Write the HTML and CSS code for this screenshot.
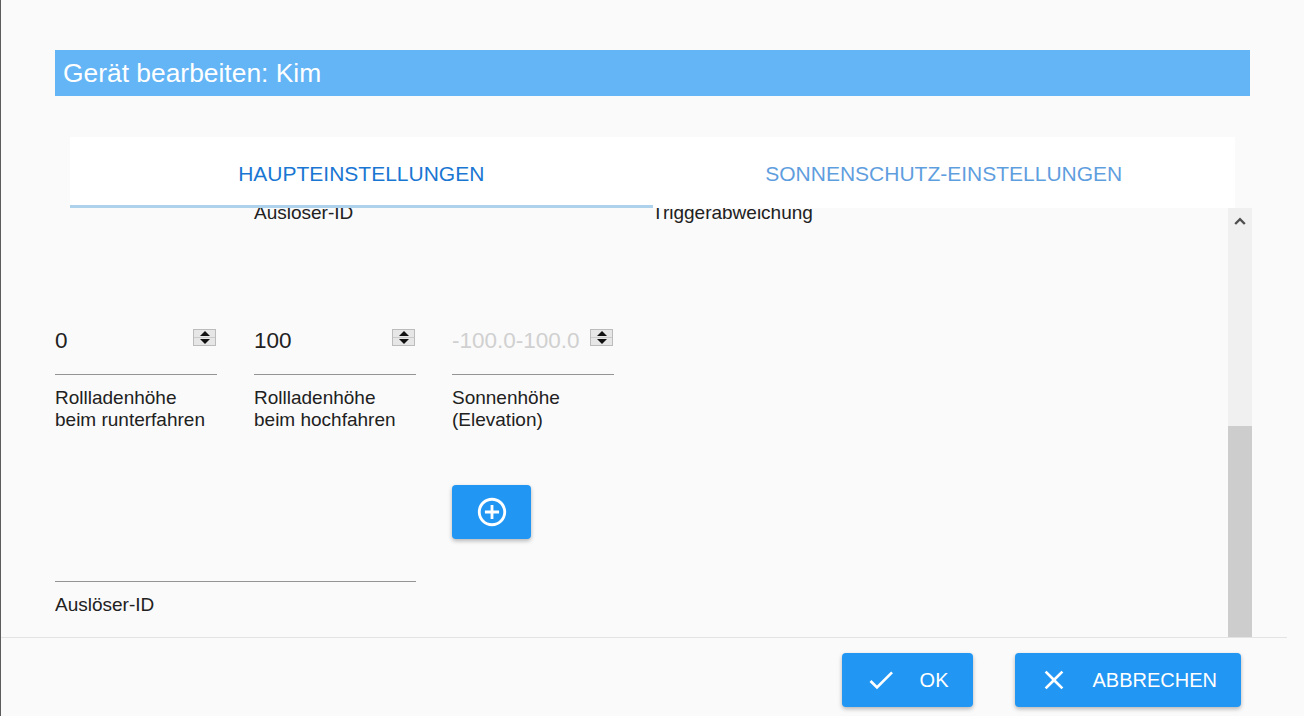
FILE: index.html
```html
<!DOCTYPE html>
<html lang="de">
<head>
    <meta charset="UTF-8">
    <meta name="viewport" content="width=device-width, initial-scale=1.0">
    <title>Gerät bearbeiten</title>
    <link rel="stylesheet" href="styles.css">
</head>
<body>
    <div class="dialog">
        <div class="dialog-body">
            <h2 class="dialog-title">Gerät bearbeiten: Kim</h2>

            <div class="tabs">
                <div class="tab tab-active">HAUPTEINSTELLUNGEN</div>
                <div class="tab">SONNENSCHUTZ-EINSTELLUNGEN</div>
                <span class="tab-indicator"></span>
            </div>

            <div class="scroll-area">
                <div class="scroll-content">
                    <!-- Labels der Felder oberhalb (weggescrollt) -->
                    <div class="grid row-top">
                        <div></div>
                        <div class="field-label">Auslöser-ID</div>
                        <div></div>
                        <div class="field-label">Triggerabweichung</div>
                    </div>

                    <div class="grid row-inputs">
                        <div class="field">
                            <div class="input-row">
                                <span class="value">0</span>
                                <span class="spinner"><span class="spin-up"></span><span class="spin-down"></span></span>
                            </div>
                            <div class="field-label">Rollladenhöhe beim runterfahren</div>
                        </div>
                        <div class="field">
                            <div class="input-row">
                                <span class="value">100</span>
                                <span class="spinner"><span class="spin-up"></span><span class="spin-down"></span></span>
                            </div>
                            <div class="field-label">Rollladenhöhe beim hochfahren</div>
                        </div>
                        <div class="field">
                            <div class="input-row">
                                <span class="value placeholder">-100.0-100.0</span>
                                <span class="spinner"><span class="spin-up"></span><span class="spin-down"></span></span>
                            </div>
                            <div class="field-label">Sonnenhöhe<br>(Elevation)</div>
                        </div>
                    </div>

                    <div class="grid row-add">
                        <button class="add-btn">
                            <svg viewBox="0 0 24 24" width="34" height="34"><path fill="currentColor" d="M13 7h-2v4H7v2h4v4h2v-4h4v-2h-4V7zm-1-5C6.48 2 2 6.48 2 12s4.48 10 10 10 10-4.48 10-10S17.52 2 12 2zm0 18c-4.41 0-8-3.59-8-8s3.59-8 8-8 8 3.59 8 8-3.59 8-8 8z"/></svg>
                        </button>
                    </div>

                    <div class="grid row-wide">
                        <div class="field field-wide">
                            <div class="input-row input-empty"></div>
                            <div class="field-label">Auslöser-ID</div>
                        </div>
                    </div>
                </div>

                <div class="scrollbar">
                    <div class="scroll-arrow">
                        <svg viewBox="0 0 12 8" width="12" height="8"><polyline points="1.2,7 6,2.2 10.8,7" fill="none" stroke="#505050" stroke-width="2.4"/></svg>
                    </div>
                    <div class="scroll-thumb"></div>
                </div>
            </div>
        </div>

        <div class="dialog-actions">
            <button class="btn">
                <svg viewBox="0 0 24 24" width="32" height="32"><path fill="currentColor" d="M9 16.17L4.83 12l-1.42 1.41L9 19 21 7l-1.41-1.41z"/></svg>
                OK
            </button>
            <button class="btn">
                <svg viewBox="0 0 24 24" width="32" height="32"><path fill="currentColor" d="M19 6.41L17.59 5 12 10.59 6.41 5 5 6.41 10.59 12 5 17.59 6.41 19 12 13.41 17.59 19 19 17.59 13.41 12z"/></svg>
                ABBRECHEN
            </button>
        </div>
    </div>
</body>
</html>
```

FILE: styles.css
```css
:root {
    --primary-color: #2196f3;
    --title-color: #64b5f6;
    --tab-color: #1976d2;
    --text-color: #212121;
    --bg-color: #fafafa;
}

* {
    box-sizing: border-box;
}

body {
    font-family: 'Liberation Sans', Arial, sans-serif;
    margin: 0;
    background-color: var(--bg-color);
    overflow: hidden;
}

.dialog {
    width: 1287px;
    height: 716px;
    display: flex;
    flex-direction: column;
    border-left: 1px solid #5c5c5c;
}

.dialog-body {
    padding: 50px 37px 0 54px;
}

.dialog-title {
    margin: 0;
    height: 46px;
    line-height: 46px;
    padding-left: 8px;
    background: var(--title-color);
    color: #fff;
    font-size: 26.4px;
    font-weight: normal;
}

.tabs {
    position: relative;
    display: flex;
    margin: 41px 15px 0;
    height: 71px;
    background: white;
}

.tab {
    flex: 1;
    display: flex;
    align-items: center;
    justify-content: center;
    padding-top: 2px;
    font-size: 21px;
    color: var(--tab-color);
    opacity: 0.7;
}

.tab-active {
    opacity: 1;
}

.tab-indicator {
    position: absolute;
    left: 0;
    bottom: 0;
    width: 50%;
    height: 3px;
    background: #aed2ec;
}

.scroll-area {
    display: flex;
    height: 429px;
    margin-right: -2px;
}

.scroll-content {
    flex: 1;
    overflow: hidden;
}

.scrollbar {
    width: 24px;
    display: flex;
    flex-direction: column;
    background: #f0f0f0;
}

.scroll-arrow {
    height: 26px;
    display: flex;
    align-items: center;
    justify-content: center;
}

.scroll-thumb {
    margin-top: auto;
    height: 211px;
    background: #cdcdcd;
}

.grid {
    display: grid;
    grid-template-columns: 199px 198px 200px 162px;
}

.field {
    width: 162px;
}

.field-label {
    font-size: 19px;
    line-height: 22px;
    color: var(--text-color);
}

.row-top {
    margin-top: -6px;
}

.row-inputs {
    margin-top: 104px;
}

.input-row {
    display: flex;
    align-items: flex-start;
    justify-content: space-between;
    height: 47px;
    border-bottom: 1px solid #949494;
}

.field .field-label {
    margin-top: 12px;
}

.value {
    font-size: 22.5px;
    line-height: 26px;
    color: var(--text-color);
    white-space: nowrap;
    overflow: hidden;
}

.placeholder {
    color: #d0d0d0;
}

.spinner {
    display: flex;
    flex-direction: column;
    flex-shrink: 0;
    width: 23px;
    height: 17px;
    margin: 1px 1px 0 0;
    border: 1px solid #bcbcbc;
    background: #e6e6e6;
}

.spin-up,
.spin-down {
    flex: 1;
    display: flex;
    align-items: center;
    justify-content: center;
}

.spin-up {
    border-bottom: 1px solid #cbcbcb;
}

.spin-up::after,
.spin-down::after {
    content: '';
    border-left: 5px solid transparent;
    border-right: 5px solid transparent;
}

.spin-up::after {
    border-bottom: 5px solid #111;
}

.spin-down::after {
    border-top: 5px solid #111;
}

.row-add {
    margin-top: 54px;
}

.add-btn {
    grid-column: 3;
    width: 79px;
    height: 54px;
    display: flex;
    align-items: center;
    justify-content: center;
    padding: 0;
    border: none;
    border-radius: 4px;
    background: var(--primary-color);
    color: white;
    box-shadow: 0 2px 4px rgba(0,0,0,0.28);
}

.row-wide {
    margin-top: 12px;
}

.field-wide {
    grid-column: 1 / span 2;
    width: 361px;
}

.input-empty {
    height: 31px;
}

.dialog-actions {
    flex: 1;
    display: flex;
    justify-content: flex-end;
    align-items: flex-start;
    gap: 42px;
    padding: 15px 46px 0 0;
    border-top: 1px solid #e3e3e3;
}

.btn {
    display: flex;
    align-items: center;
    gap: 23px;
    height: 54px;
    padding: 0 24px 0 23px;
    border: none;
    border-radius: 4px;
    background: var(--primary-color);
    color: white;
    font-family: inherit;
    font-size: 20px;
    box-shadow: 0 2px 4px rgba(0,0,0,0.28);
}
```
